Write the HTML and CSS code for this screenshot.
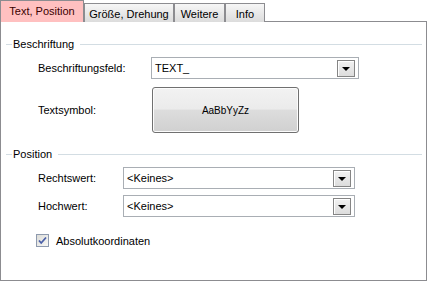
FILE: index.html
```html
<!DOCTYPE html>
<html lang="de">

<head>
    <title>Beschriftung</title>
    <meta charset="UTF-8">
    <meta name="viewport" content="width=device-width, initial-scale=1">
    <link rel="stylesheet" href="styles.css">
</head>

<body>
    <div class="tabs">
        <div class="tab active t1">Text, Position</div>
        <div class="tab t2">Größe, Drehung</div>
        <div class="tab t3">Weitere</div>
        <div class="tab t4">Info</div>
    </div>

    <div class="panel">
        <!-- Gruppe Beschriftung -->
        <div class="group first">
            <span class="group-line short"></span>
            <span class="group-title">Beschriftung</span>
            <span class="group-line"></span>
        </div>
        <div class="row row-field">
            <span class="label wide">Beschriftungsfeld:</span>
            <div class="combo combo-field">
                <span class="combo-text">TEXT_</span>
                <span class="drop"><span class="arrow"></span></span>
            </div>
        </div>
        <div class="row row-symbol">
            <span class="label wide sym">Textsymbol:</span>
            <div class="symbol">AaBbYyZz</div>
        </div>

        <!-- Gruppe Position -->
        <div class="group second">
            <span class="group-line short"></span>
            <span class="group-title">Position</span>
            <span class="group-line"></span>
        </div>
        <div class="row row-pos">
            <span class="label narrow">Rechtswert:</span>
            <div class="combo combo-pos">
                <span class="combo-text">&lt;Keines&gt;</span>
                <span class="drop"><span class="arrow"></span></span>
            </div>
        </div>
        <div class="row row-pos2">
            <span class="label narrow">Hochwert:</span>
            <div class="combo combo-pos">
                <span class="combo-text">&lt;Keines&gt;</span>
                <span class="drop"><span class="arrow"></span></span>
            </div>
        </div>
        <div class="row row-check">
            <span class="check">
                <svg width="13" height="13" viewBox="0 0 13 13">
                    <path d="M3 6.5 L5.2 9 L10 3.5" fill="none" stroke="#4a5fa8" stroke-width="1.8"/>
                </svg>
            </span>
            <span class="check-label">Absolutkoordinaten</span>
        </div>
    </div>
</body>

</html>
```

FILE: styles.css
```css
* {
    margin: 0px;
    padding: 0px;
    box-sizing: border-box;
}

body {
    background: #fff;
    font-family: "Liberation Sans", Arial, sans-serif;
    font-size: 11px;
    color: #000;
    width: 429px;
    height: 283px;
    overflow: hidden;
}

.tabs {
    display: flex;
    align-items: flex-end;
    height: 22px;
    position: relative;
    z-index: 2;
}

.tab {
    height: 19px;
    border: 1px solid #8c8c90;
    border-bottom: none;
    background: linear-gradient(#f6f6f6, #dcdcdc);
    display: flex;
    align-items: center;
    justify-content: center;
    padding-top: 1px;
}

.tab.active {
    height: 22px;
    background: #ffc0c0;
    color: #3a0000;
    padding-top: 0px;
    padding-bottom: 2px;
}

.t1 {
    width: 84px;
}

.t2 {
    width: 90px;
}

.t3 {
    width: 51px;
}

.t4 {
    width: 40px;
}

.panel {
    width: 427px;
    height: 260px;
    margin-top: -1px;
    border: 1px solid #8c8c90;
    padding-top: 15px;
}

.group {
    display: flex;
    align-items: center;
    height: 14px;
    padding-left: 5px;
    padding-right: 4px;
}

.group.second {
    margin-top: 14px;
}

.group-line {
    flex: 1;
    height: 1px;
    background: #d3dde3;
}

.group-line.short {
    flex: none;
    width: 6px;
}

.group-title {
    padding: 0px 6px 0px 1px;
}

.row {
    display: flex;
    align-items: center;
    padding-left: 37px;
}

.row-field {
    margin-top: 6px;
}

.row-symbol {
    margin-top: 8px;
}

.row-pos {
    margin-top: 6px;
}

.row-pos2 {
    margin-top: 6px;
}

.row-check {
    margin-top: 17px;
    padding-left: 35px;
}

.label.wide {
    width: 113px;
}

.label.narrow {
    width: 85px;
}

.label.sym {
    width: 114px;
}

.combo {
    height: 22px;
    border: 1px solid #a9aeb4;
    display: flex;
    align-items: center;
    padding: 0px 3px 0px 3px;
}

.combo-field {
    width: 208px;
}

.combo-pos {
    width: 232px;
}

.combo-text {
    flex: 1;
}

.drop {
    width: 18px;
    height: 17px;
    border: 1px solid #858585;
    background: linear-gradient(#f2f2f2, #dcdcdc);
    display: flex;
    align-items: center;
    justify-content: center;
    box-shadow: inset 1px 1px 0px #fff;
}

.arrow {
    width: 0px;
    height: 0px;
    border-left: 4px solid transparent;
    border-right: 4px solid transparent;
    border-top: 4px solid #000;
    margin-top: 1px;
}

.symbol {
    width: 147px;
    height: 46px;
    border: 1px solid #707070;
    border-radius: 3px;
    background: linear-gradient(#f2f2f2 0%, #ebebeb 48%, #dddddd 50%, #d0d0d0 100%);
    box-shadow: inset 0px 0px 0px 1px #fcfcfc;
    display: flex;
    align-items: center;
    justify-content: center;
    font-size: 10px;
    color: #000;
}

.check {
    width: 13px;
    height: 13px;
    border: 1px solid #8e9aae;
    background: linear-gradient(135deg, #dcdcd8, #f8f8f6);
    display: flex;
}

.check svg {
    margin: -1px;
}

.check-label {
    margin-left: 7px;
}
```
